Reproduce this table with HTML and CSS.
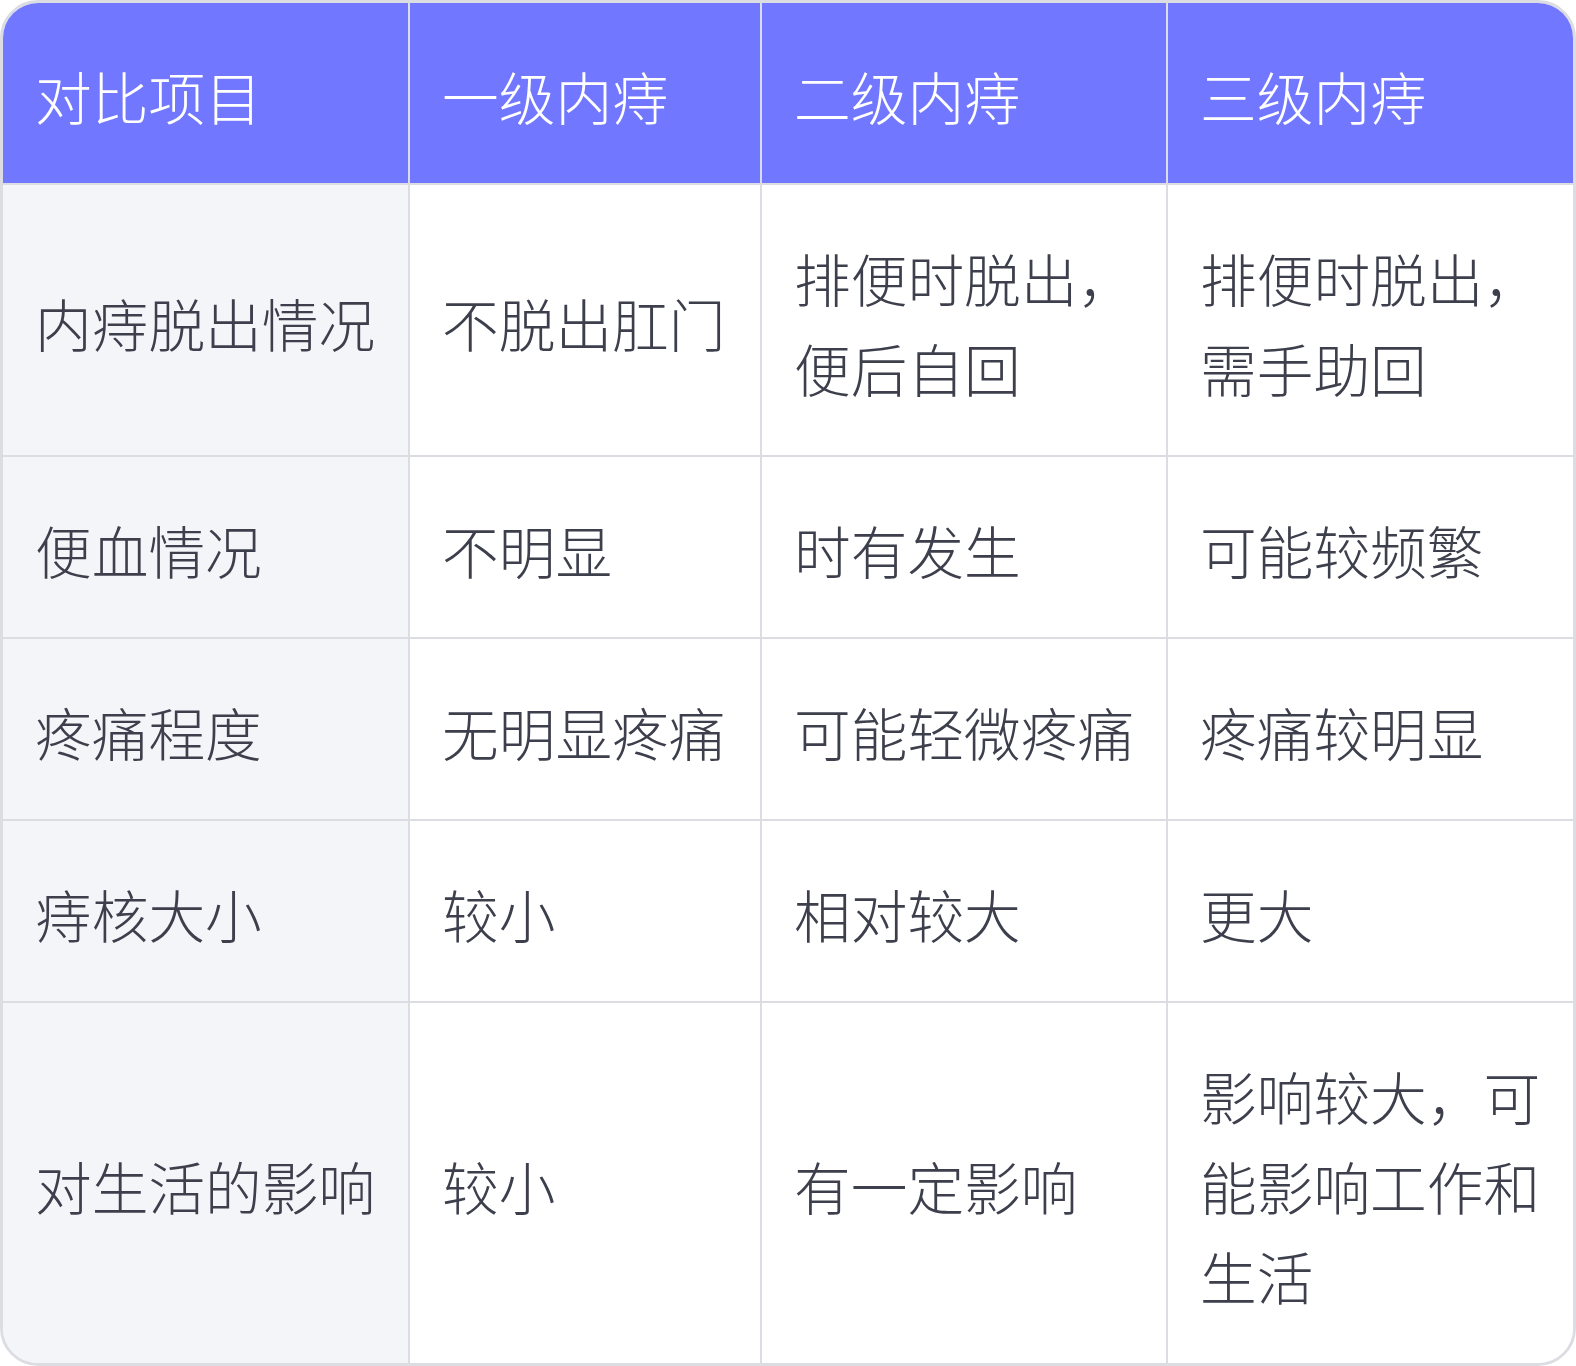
FILE: index.html
```html
<!DOCTYPE html>
<html lang="zh-CN">
<head>
<meta charset="utf-8">
<title>内痔分级对比</title>
<link rel="stylesheet" href="styles.css">
</head>
<body>
<div class="wrap">
<table class="cmp">
  <colgroup>
    <col class="c1"><col class="c2"><col class="c3"><col class="c4">
  </colgroup>
  <thead>
    <tr><th>对比项目</th><th>一级内痔</th><th>二级内痔</th><th>三级内痔</th></tr>
  </thead>
  <tbody>
    <tr><td>内痔脱出情况</td><td>不脱出肛门</td><td>排便时脱出，便后自回</td><td>排便时脱出，需手助回</td></tr>
    <tr><td>便血情况</td><td>不明显</td><td>时有发生</td><td>可能较频繁</td></tr>
    <tr><td>疼痛程度</td><td>无明显疼痛</td><td>可能轻微疼痛</td><td>疼痛较明显</td></tr>
    <tr><td>痔核大小</td><td>较小</td><td>相对较大</td><td>更大</td></tr>
    <tr class="last"><td>对生活的影响</td><td>较小</td><td>有一定影响</td><td>影响较大，可能影响工作和生活</td></tr>
  </tbody>
</table>
</div>
</body>
</html>
```
FILE: styles.css
```css
html, body {
  margin: 0;
  padding: 0;
  background: #ffffff;
}
.wrap {
  width: 1576px;
  box-sizing: border-box;
  border: 3px solid #dcdde3;
  border-radius: 38px;
  overflow: hidden;
}
.cmp {
  width: 100%;
  table-layout: fixed;
  border-collapse: separate;
  border-spacing: 0;
  font-family: "Noto Sans CJK SC", "Noto Sans", sans-serif;
  font-weight: 300;
  font-size: 56.7px;
  line-height: 90px;
  color: #3d404c;
}
.c1 { width: 407px; }
.c2 { width: 352px; }
.c3 { width: 406px; }
.c4 { width: 405px; }
.cmp th, .cmp td {
  box-sizing: border-box;
  text-align: left;
  vertical-align: middle;
  padding: 47px 26px 43px 32px;
  border-right: 2px solid #dcdde3;
  border-bottom: 2px solid #dcdde3;
}
.cmp th:last-child, .cmp td:last-child {
  border-right: none;
}
.cmp tbody tr.last td {
  border-bottom: none;
}
.cmp th {
  background: #7177ff;
  color: #ffffff;
  font-weight: 300;
}
.cmp td {
  background: #ffffff;
}
.cmp td:first-child {
  background: #f4f5f9;
}
```
